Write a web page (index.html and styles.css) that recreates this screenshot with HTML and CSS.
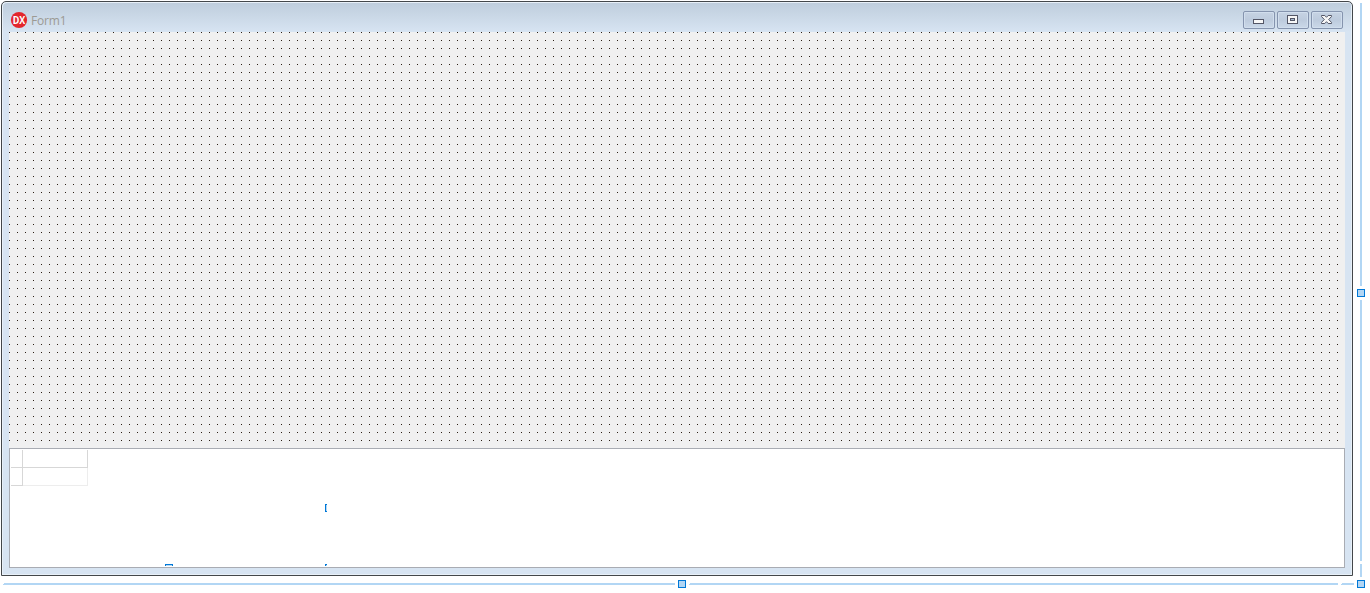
FILE: index.html
```html
<!DOCTYPE html>
<html lang="en">
<head>
<meta charset="utf-8">
<title>Form1</title>
<link rel="stylesheet" href="styles.css">
</head>
<body>
<main class="designer">
  <section class="window">
    <header class="titlebar">
      <svg class="app-icon" width="16" height="16" viewBox="0 0 16 16"><circle cx="8" cy="8" r="8.1" fill="#e3262d"/><text x="8" y="12" text-anchor="middle" textLength="12.6" lengthAdjust="spacingAndGlyphs" class="logo-text">DX</text></svg>
      <span class="title">Form1</span>
      <div class="buttons">
        <span class="button"><svg width="12" height="10" shape-rendering="crispEdges"><rect x=".5" y="4.5" width="10" height="4" rx="1" fill="#f7f7f7" stroke="#535666"/></svg></span>
        <span class="button"><svg width="12" height="10" shape-rendering="crispEdges"><rect x=".5" y=".5" width="10" height="8" rx="1" fill="#f7f7f7" stroke="#535666"/><rect x="3.5" y="3.5" width="4" height="2" fill="#a9b9d0" stroke="#535666"/></svg></span>
        <span class="button"><svg width="12" height="10"><path d="M.5 .5H3.8L5.5 2.3 7.2 .5H10.5V1.6L7.7 4.5 10.5 7.4V8.5H7.2L5.5 6.7 3.8 8.5H.5V7.4L3.3 4.5 .5 1.6Z" fill="#f7f7f7" stroke="#535666"/></svg></span>
      </div>
    </header>
    <div class="canvas"></div>
    <div class="dbgrid">
      <div class="cells"><i class="cell"></i><i class="cell"></i><i class="cell"></i><i class="cell pale"></i></div>
      <i class="nub bottom"></i><i class="nub side"></i><i class="nub corner"></i>
    </div>
  </section>
  <aside class="rail vertical"><i class="line upper"></i><i class="handle"></i><i class="line lower"></i><i class="line tail"></i></aside>
  <footer class="rail horizontal"><i class="line left"></i><i class="handle"></i><i class="line right"></i><i class="line end"></i><i class="handle last"></i></footer>
</main>
</body>
</html>
```
FILE: styles.css
```css
* { box-sizing: border-box; }
body { margin: 0; background: #fff; overflow: hidden; font-family: "Open Sans", "Noto Sans", sans-serif; }
.designer { width: 1370px; height: 593px; display: grid; grid-template-columns: 1352px 8px; grid-template-rows: 575px 8px; column-gap: 4px; row-gap: 4px; padding: 1px 0 0 1px; }
.window { display: flex; flex-direction: column; border: 1px solid #43474a; border-radius: 5px 5px 0 0; padding: 0 7px 7px; background: linear-gradient(#becddc, #d7e4f2 30px); box-shadow: inset 1px 1px #e8f0f8, inset -1px -1px #e8f0f8; }
.titlebar { height: 30px; flex: none; display: flex; align-items: center; padding: 6px 2px 0; }
.app-icon { flex: none; overflow: visible; }
.logo-text { font: 700 11px "Open Sans", sans-serif; fill: #fff; }
.title { font-size: 12px; line-height: 16px; margin: 2px 0 0 4px; letter-spacing: -0.2px; color: #9c9a94; }
.buttons { display: flex; gap: 2px; margin-left: auto; }
.button { width: 32px; height: 18px; display: flex; padding: 3px 0 0 9px; border: 1px solid #8594ae; border-radius: 2px; background: linear-gradient(#c6d3e3, #bdcbdd 50%, #cad8e8); box-shadow: inset 0 0 0 1px #d1deed; }
.canvas { height: 416px; flex: none; background: conic-gradient(from 0deg at 1px 1px, #f0f0f0 75%, #2a1e14 0) 0 0 / 8px 8px; }
.dbgrid { position: relative; height: 120px; flex: none; border: 1px solid #a9acb3; background: #fff; padding: 1px; }
.cells { display: grid; grid-template-columns: 12px 65px; grid-template-rows: 18px 18px; }
.cell { border-right: 1px solid #d7d7d7; border-bottom: 1px solid #d7d7d7; }
.pale { border-color: #ededed; }
.nub { position: absolute; background: #b5d7f3; border: 1px solid #0078d7; }
.bottom { left: 155px; top: 115px; width: 8px; height: 2px; border-bottom: 0; }
.side { left: 315px; top: 55px; width: 2px; height: 8px; border-right: 0; }
.corner { left: 315px; top: 115px; width: 2px; height: 2px; border-right: 0; border-bottom: 0; }
.rail { display: flex; }
.vertical { flex-direction: column; align-items: center; padding-top: 2px; }
.horizontal { grid-column: 1 / 3; align-items: center; padding-left: 2px; }
.line { background: #b2d6f4; flex: none; }
.vertical .line { width: 2px; }
.horizontal .line { height: 2px; }
.handle { width: 8px; height: 8px; flex: none; background: #b2d6f4; border: 1px solid #0078d7; }
.vertical .upper { height: 283px; margin-bottom: 3px; }
.vertical .lower { height: 261px; margin: 3px 0 3px; }
.vertical .tail { height: 13px; }
.horizontal .left { width: 672px; margin-right: 3px; clip-path: polygon(1px 0, 100% 0, 100% 100%, 0 100%, 0 50%, 1px 50%); }
.horizontal .right { width: 649px; margin: 0 3px; clip-path: polygon(1px 0, 100% 0, 100% 100%, 0 100%, 0 50%, 1px 50%); }
.horizontal .end { width: 13px; clip-path: polygon(1px 0, 100% 0, 100% 100%, 0 100%, 0 50%, 1px 50%); }
.last { margin-left: auto; }
```
